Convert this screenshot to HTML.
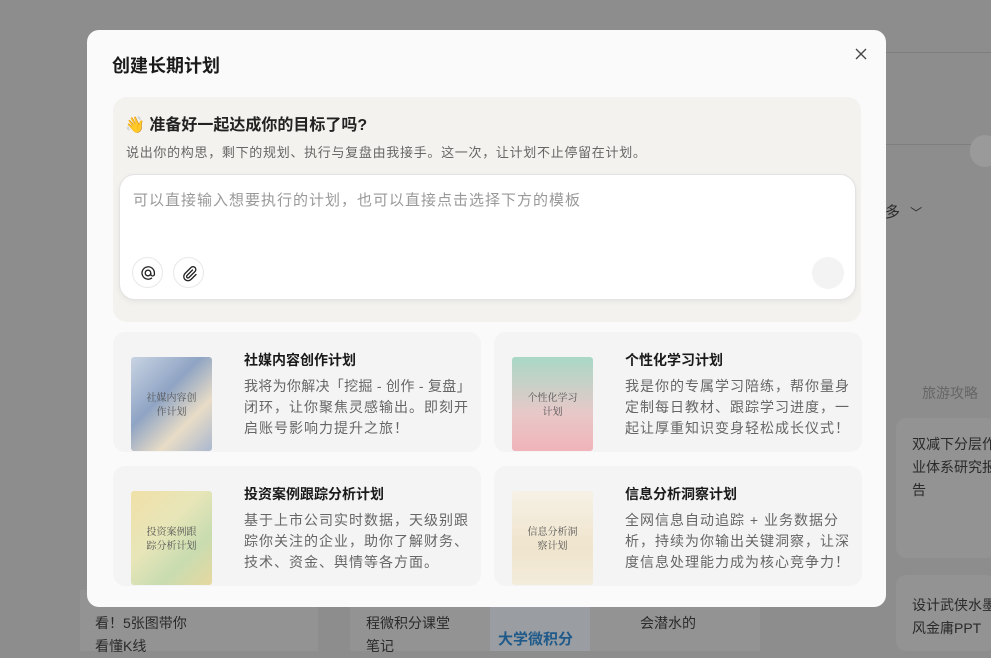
<!DOCTYPE html>
<html><head><meta charset="utf-8">
<style>
*{box-sizing:border-box;margin:0;padding:0}
body{width:991px;height:651px;overflow:hidden;background:#8d8d8d;font-family:"Liberation Sans","Noto Sans CJK SC",sans-serif;position:relative}
.bg{position:absolute;color:#2a2a2a;font-size:14px;line-height:23px}
.modal{position:absolute;left:87px;top:30px;width:799px;height:577px;background:#fafafa;border-radius:12px;overflow:hidden}
.title{position:absolute;left:25px;top:22px;font-size:18px;font-weight:bold;color:#1a1a1a}
.close{position:absolute;left:767px;top:17px}
.intro{position:absolute;left:26px;top:67px;width:748px;height:225px;background:#f3f2ee;border-radius:14px}
.h{position:absolute;left:12px;top:14px;font-size:16px;font-weight:bold;color:#222}
.sub{position:absolute;left:13px;top:45px;font-size:13px;letter-spacing:0.7px;color:#666}
.input{position:absolute;left:6px;top:77px;width:737px;height:126px;background:#fff;border:1px solid #e3e3e3;border-radius:16px;box-shadow:0 2px 6px rgba(0,0,0,.06)}
.ph{position:absolute;left:13px;top:14px;font-size:15px;letter-spacing:1px;color:#999}
.ic{position:absolute;top:82px;width:31px;height:31px;border-radius:50%;border:1px solid #e8e8e8;background:#fff}
.send{position:absolute;left:692px;top:82px;width:32px;height:32px;border-radius:50%;background:#f3f3f3}
.card{position:absolute;width:368px;height:120px;background:#f4f4f4;border-radius:12px}
.img{position:absolute;left:18px;top:25px;width:81px;height:94px;border-radius:3px;font-family:"Noto Serif CJK SC",serif;font-size:10px;color:#555;display:flex;align-items:center;justify-content:center;text-align:center;line-height:14px;padding:0 14px}
.ct{position:absolute;left:131px;top:18px;font-size:14px;font-weight:bold;color:#1a1a1a}
.cd{position:absolute;left:131px;top:44px;white-space:nowrap;font-size:14px;letter-spacing:1px;line-height:21px;color:#666}
</style></head><body>
<div class="bg" style="left:885px;top:201px;font-size:15px">多 <span style="font-size:12px;margin-left:6px">﹀</span></div>
<div style="position:absolute;left:886px;top:52px;width:105px;height:1px;background:#7e7e7e"></div>
<div style="position:absolute;left:886px;top:144px;width:105px;height:1px;background:#7e7e7e"></div>
<div style="position:absolute;left:970px;top:135px;width:30px;height:32px;border-radius:16px;background:#9a9a9a"></div>
<div class="bg" style="left:922px;top:382px;color:#666">旅游攻略</div>
<div style="position:absolute;left:896px;top:418px;width:100px;height:140px;background:#939393;border-radius:10px"></div>
<div class="bg" style="left:912px;top:433px;width:120px;white-space:nowrap">双减下分层作<br>业体系研究报<br>告</div>
<div style="position:absolute;left:896px;top:575px;width:100px;height:76px;background:#939393;border-radius:10px"></div>
<div class="bg" style="left:912px;top:594px;white-space:nowrap">设计武侠水墨<br>风金庸PPT</div>
<div style="position:absolute;left:80px;top:590px;width:238px;height:61px;background:#939393"></div>
<div class="bg" style="left:95px;top:612px;width:100px">看！5张图带你<br>看懂K线</div>
<div style="position:absolute;left:350px;top:590px;width:410px;height:61px;background:#939393"></div>
<div class="bg" style="left:366px;top:612px">程微积分课堂<br>笔记</div>
<div style="position:absolute;left:490px;top:595px;width:100px;height:56px;background:#9a9ea2"></div>
<div class="bg" style="left:498px;top:628px;color:#1f5a8a;font-weight:bold;font-size:15px">大学微积分</div>
<div class="bg" style="left:640px;top:612px">会潜水的</div>
<div class="modal">
 <div class="title">创建长期计划</div>
 <div class="close"><svg width="14" height="14" viewBox="0 0 14 14"><path d="M2 2l10 10M12 2L2 12" stroke="#444" stroke-width="1.3"/></svg></div>
 <div class="intro">
  <div class="h">👋 准备好一起达成你的目标了吗?</div>
  <div class="sub">说出你的构思，剩下的规划、执行与复盘由我接手。这一次，让计划不止停留在计划。</div>
  <div class="input">
   <div class="ph">可以直接输入想要执行的计划，也可以直接点击选择下方的模板</div>
   <div class="ic" style="left:12px"><svg width="31" height="31" viewBox="0 0 31 31"><circle cx="15" cy="15" r="2.8" fill="none" stroke="#222" stroke-width="1.3"/><path d="M17.8 15v1.2a1.8 1.8 0 0 0 3.6 0V15a6.2 6.2 0 1 0-2.4 4.9" fill="none" stroke="#222" stroke-width="1.3"/></svg></div>
   <div class="ic" style="left:53px"><svg width="31" height="31" viewBox="0 0 31 31"><path d="M18.5 12l-5.5 5.5a1.4 1.4 0 0 0 2 2l6-6a2.8 2.8 0 0 0-4-4l-6 6a4.2 4.2 0 0 0 6 6l5-5" fill="none" stroke="#222" stroke-width="1.3" stroke-linecap="round"/></svg></div>
   <div class="send"></div>
  </div>
 </div>
 <div class="card" style="left:26px;top:302px"><div class="img" style="background:linear-gradient(135deg,#c9d4e3,#8fa4c4 40%,#e8dcc6 70%,#aab8cf)">社媒内容创作计划</div><div class="ct">社媒内容创作计划</div><div class="cd"><span style="letter-spacing:0.3px">我将为你解决「挖掘 - 创作 - 复盘」</span><br>闭环，让你聚焦灵感输出。即刻开<br>启账号影响力提升之旅！</div></div>
 <div class="card" style="left:407px;top:302px"><div class="img" style="background:linear-gradient(180deg,#a9d8c6,#e8c8c8 60%,#f0b4b9)">个性化学习计划</div><div class="ct">个性化学习计划</div><div class="cd">我是你的专属学习陪练，帮你量身<br>定制每日教材、跟踪学习进度，一<br>起让厚重知识变身轻松成长仪式！</div></div>
 <div class="card" style="left:26px;top:436px"><div class="img" style="background:linear-gradient(135deg,#f0e0a8,#e8e6b8 40%,#c8dcb0 70%,#e6d8a0)">投资案例跟踪分析计划</div><div class="ct">投资案例跟踪分析计划</div><div class="cd">基于上市公司实时数据，天级别跟<br>踪你关注的企业，助你了解财务、<br>技术、资金、舆情等各方面。</div></div>
 <div class="card" style="left:407px;top:436px"><div class="img" style="background:linear-gradient(180deg,#f6f1e6,#efe4cc 60%,#f3ecdc)">信息分析洞察计划</div><div class="ct">信息分析洞察计划</div><div class="cd">全网信息自动追踪 + 业务数据分<br>析，持续为你输出关键洞察，让深<br>度信息处理能力成为核心竞争力！</div></div>
</div>
</body></html>
